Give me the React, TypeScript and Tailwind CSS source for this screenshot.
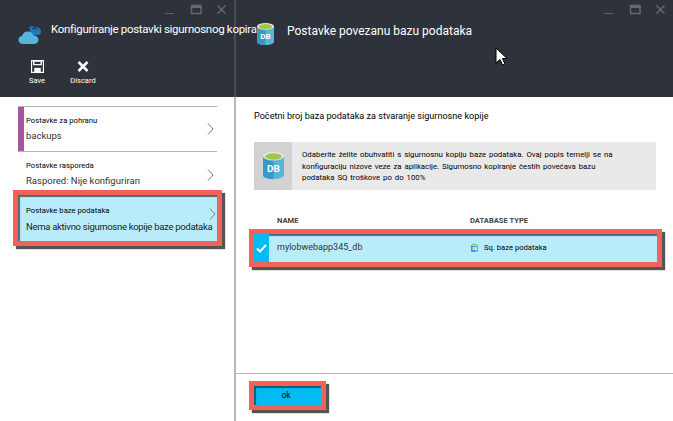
const font = { fontFamily: 'Roboto, "Noto Sans", sans-serif' };

function WindowControls() {
    return (
        <div className="flex justify-end items-start h-[20px] pt-[4px] pr-[6px] gap-[12px]">
            <svg width="14" height="11" viewBox="0 0 14 11"><path d="M1 9.500h9" stroke="#5b6068" strokeWidth="1" /></svg>
            <svg width="14" height="11" viewBox="0 0 14 11"><rect x="1.500" y="1.500" width="9.500" height="8" fill="none" stroke="#63676e" strokeWidth="1.500" /><path d="M1 3h11" stroke="#63676e" strokeWidth="2" /></svg>
            <svg width="12" height="11" viewBox="0 0 12 11"><path d="M1.500 1.500l8 8M9.500 1.500l-8 8" stroke="#63676e" strokeWidth="1.500" /></svg>
        </div>
    );
}

function CloudIcon() {
    return (
        <svg width="24" height="20" viewBox="0 0 24 20" className="shrink-0">
            <path d="M11 2.500c2-2 5-1.500 6 0 3-1 6 1 6 4 0 2-1.500 3.500-3 3.500h-6z" fill="#1f78b8" />
            <path d="M14 4l3-2v2h2" fill="none" stroke="#2e333b" strokeWidth="1" />
            <path d="M5 19c-3 0-4.500-2-4.500-4 0-2.500 2-4 3.500-4 1-3 3.500-5 6.500-4.500 2.500 0 4.500 2 5 4 3 0 5 2 5 4.300 0 2.500-2 4.200-4.500 4.200z" fill="#59b4d9" />
        </svg>
    );
}

function DbIcon({ size }: { size: number }) {
    return (
        <svg width={size} height={size * 1.3} viewBox="0 0 20 26" className="shrink-0">
            <path d="M0 4v18c0 2.200 4.500 4 10 4s10-1.800 10-4V4z" fill="#59b4d9" />
            <path d="M10 8c-5 0-10-1.800-10-4v18c0 2.200 4.500 4 10 4z" fill="#3999c6" />
            <ellipse cx="10" cy="4" rx="10" ry="4" fill="#e8e8e8" />
            <ellipse cx="10" cy="4.300" rx="8" ry="3" fill="#a0c846" />
            <text x="10" y="19" textAnchor="middle" fontSize="9.500" fontWeight="700" fill="#fff" style={font}>DB</text>
        </svg>
    );
}

function Chevron() {
    return (
        <svg width="7" height="12" viewBox="0 0 7 12" className="shrink-0">
            <path d="M1 .5l5 5.500-5 5.500" fill="none" stroke="#7a7a7a" strokeWidth="1" />
        </svg>
    );
}

function SettingRow({ label, value, border }: { label: string; value: string; border?: boolean }) {
    return (
        <div className={`flex items-center h-[45px] ${border ? "border-b border-[#b5b5b5]" : ""}`}>
            <div className="flex-1 pl-[8px] min-w-0">
                <div className="text-[7.700px] leading-[12px] text-black">{label}</div>
                <div className="text-[9.500px] leading-[16px] mt-[1px] text-[#333]">{value}</div>
            </div>
            <div className="pr-[3px]"><Chevron /></div>
        </div>
    );
}

export default function App() {
    return (
        <div className="flex w-[673px] h-[421px] overflow-hidden bg-white" style={font}>
            {/* left blade */}
            <div className="w-[236px] shrink-0 flex flex-col">
                <div className="h-[97px] bg-[#2e333b] border-r-2 border-[#4a4e55]">
                    <WindowControls />
                    <div className="flex items-start pl-[18px] pt-[2px] gap-[9px] relative z-10">
                        <div className="pt-[3px]"><CloudIcon /></div>
                        <div className="text-[11.500px] leading-[16px] -mt-[1px] tracking-[-0.3px] text-white whitespace-nowrap">Konfiguriranje postavki sigurnosnog kopira</div>
                    </div>
                    <div className="flex pl-[25px] mt-[15px] gap-[20px] text-white">
                        <div className="flex flex-col items-center w-[24px]">
                            <svg width="13" height="13" viewBox="0 0 14 14"><path d="M.5 .5h13v13H.5z" fill="none" stroke="#fff" strokeWidth="1.500" /><path d="M3 1v4h8V1z" fill="none" stroke="#fff" strokeWidth="1.500" /><path d="M3.500 8.500h7V13h-7z" fill="#fff" /></svg>
                            <div className="text-[7.500px] leading-[10px] mt-[3px]">Save</div>
                        </div>
                        <div className="flex flex-col items-center w-[28px]">
                            <svg width="12" height="13" viewBox="0 0 12 13"><path d="M1.500 2l9 9M10.500 2l-9 9" stroke="#fff" strokeWidth="2.500" /></svg>
                            <div className="text-[7.500px] leading-[10px] mt-[3px]">Discard</div>
                        </div>
                    </div>
                </div>
                <div className="flex-1 border-r-2 border-[#b8b8b8] pl-[18px] pr-[17px] pt-[9px]">
                    <div className="border-t border-[#b5b5b5] relative">
                        <div className="absolute left-0 top-0 w-[6px] h-[44px] bg-[#a855a0]" />
                        <SettingRow label="Postavke za pohranu" value="backups" border />
                    </div>
                    <SettingRow label="Postavke rasporeda" value="Raspored: Nije konfiguriran" />
                    <div className="-ml-[5px] -mr-[5px] mt-[-7px] border-[5px] border-[#f16358] shadow-[3px_3px_1px_#555]">
                        <div className="bg-[#b9ecfb] h-[46px] flex items-center pl-[8px] pt-[3px] shadow-[inset_2px_2px_1px_#4b6a75]">
                            <div className="flex-1 min-w-0">
                                <div className="text-[7.700px] leading-[12px] text-black">Postavke baze podataka</div>
                                <div className="text-[9.500px] leading-[15px] tracking-[-0.3px] mt-[2px] text-[#222] whitespace-nowrap">Nema aktivno sigurnosne kopije baze podataka</div>
                            </div>
                            <div className="relative -ml-[7px] -top-[6px] pr-[1px]"><Chevron /></div>
                        </div>
                    </div>
                </div>
            </div>
            {/* right blade */}
            <div className="flex-1 flex flex-col min-w-0">
                <div className="h-[97px] bg-[#2e333b] relative">
                    <WindowControls />
                    <div className="flex items-start pl-[21px] pt-[3px] gap-[13px] relative z-20">
                        <DbIcon size={17} />
                        <div className="text-[12px] leading-[16px] text-white whitespace-nowrap">Postavke povezanu bazu podataka</div>
                    </div>
                    <svg width="13" height="20" viewBox="0 0 13 20" className="absolute left-[259px] top-[47px] z-30">
                        <path d="M1 1v15l4-3.500 2.500 5.500 2.500-1-2.500-5.500H12z" fill="#fff" stroke="#000" strokeWidth="1" />
                    </svg>
                </div>
                <div className="flex-1 flex flex-col min-h-0">
                    <div className="flex-1 pl-[18px] pr-[17px] pt-[12px]">
                        <div className="text-[9.100px] leading-[14px] text-black">Početni broj baza podataka za stvaranje sigurnosne kopije</div>
                        <div className="flex mt-[19px] h-[48px] bg-[#e9e9e9]">
                            <div className="w-[38px] bg-[#d2d2d2] flex items-center justify-center">
                                <DbIcon size={21} />
                            </div>
                            <div className="pl-[10px] pt-[7px] pr-[34px] text-[7.800px] leading-[11.500px] [word-spacing:1px] text-black flex-1">
                                Odaberite želite obuhvatiti s sigurnosnu kopiju baze podataka. Ovaj popis temelji se na konfiguraciju nizove veze za aplikacije. Sigurnosno kopiranje čestih povećava bazu podataka SQ troškove po do 100%
                            </div>
                        </div>
                        <div className="flex mt-[26px] text-[7.600px] leading-[10px] font-bold text-[#444]">
                            <div className="w-[216px] pl-[23px]">NAME</div>
                            <div>DATABASE TYPE</div>
                        </div>
                        <div className="-ml-[5px] mt-[3px] w-[413px] border-[5px] border-[#f16358] shadow-[3px_3px_1px_#555]">
                            <div className="flex items-center h-[28px] bg-[#b9ecfb] shadow-[inset_2px_2px_1px_#4b6a75]">
                                <div className="w-[15px] h-full bg-[#00bcf2] flex items-center justify-center">
                                    <svg width="11" height="9" viewBox="0 0 11 9"><path d="M1 4.500l3 3 6-6.500" fill="none" stroke="#fff" strokeWidth="2" /></svg>
                                </div>
                                <div className="w-[202px] pl-[8px] text-[9px] text-[#333]">mylobwebapp345_db</div>
                                <div className="flex items-center gap-[6px] text-[7.650px] text-black">
                                    <DbIcon size={7} />
                                    <span>Sq. baze podataka</span>
                                </div>
                            </div>
                        </div>
                    </div>
                    <div className="h-[48px] border-t border-[#b8b8b8] pl-[13px] pt-[7px]">
                        <div className="w-[77px] border-[5px] border-[#f16358] shadow-[3px_3px_1px_#555]">
                            <div className="h-[19px] bg-[#00bcf2] shadow-[inset_2px_2px_1px_#0a5f7a] flex items-center justify-center pr-[3px] text-[8.500px] text-black">ok</div>
                        </div>
                    </div>
                </div>
            </div>
        </div>
    );
}
